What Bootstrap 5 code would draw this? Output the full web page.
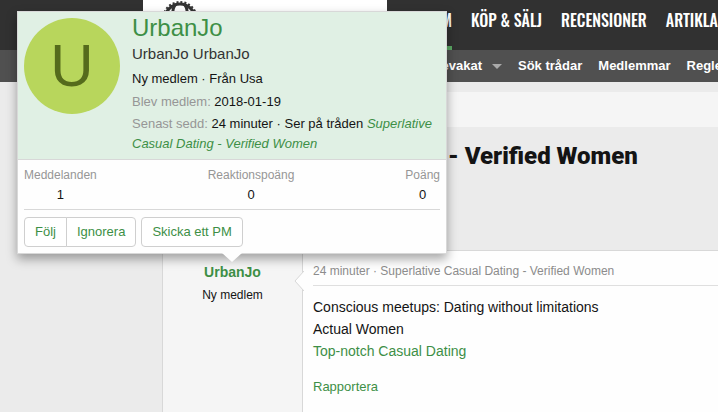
<!DOCTYPE html>
<html lang="sv">
<head>
<meta charset="utf-8">
<meta name="viewport" content="width=device-width, initial-scale=1">
<title>Superlative Casual Dating - Verified Women</title>
<link href="https://cdn.jsdelivr.net/npm/bootstrap@5.3.0/dist/css/bootstrap.min.css" rel="stylesheet">
<style>
body{background:#ebebeb;color:#141414;font:13px/20px "Liberation Sans",Arial,sans-serif}
a{color:#3d8f46;text-decoration:none}
.site-head{background:#313131;height:50px;padding-left:143px}
.site-logo{background:#fff;width:244px;height:50px;padding-left:19px}
.main-nav{gap:19px;min-width:0}
.main-nav a{color:#fff;font:500 16px/40px Oswald,"Roboto Condensed","Open Sans Condensed",Roboto,sans-serif;white-space:nowrap}
.main-nav .first-item{width:65px}
.main-nav .current{border-bottom:4px solid #5ba864;height:50px}
.sub-nav{background:#505050;height:32px;padding-left:360px;gap:16px}
.sub-nav a{color:#fff;font-weight:bold;white-space:nowrap}
.sub-nav .first-item{width:142px;gap:10px}
.caret{border:5px solid transparent;border-top-color:#aaa;border-bottom:0}
.page-body{padding-left:162px}
.crumbs{background:#f5f5f5;height:35px;margin-top:10px}
.thread-title{font:900 24px/30px Roboto,sans-serif;margin:14px 0 79px;white-space:nowrap}
.post{background:#fefefe;border:1px solid #d8d8d8;border-width:1px 0 0 1px;min-height:162px}
.post-user{width:140px;background:#f5f5f5;border-right:1px solid #d8d8d8;padding-top:11px;font-size:12px}
.post-user a{font-size:14px;font-weight:bold}
.post-user .role{margin-top:3px}
.post-arrow{left:131px;top:20px}
.post-main{padding:10px 0 0 10px}
.post-meta{border-bottom:1px solid #dfdfdf;color:#8c8c8c;font-size:12px;padding-bottom:4px;margin-bottom:10px}
.post-text{font-size:14px;line-height:22px;margin-bottom:15px}
.member-tip{left:17px;top:11px;width:430px;background:#fefefe;border:1px solid #d8d8d8;box-shadow:0 5px 10px rgba(0,0,0,.35)}
.tip-head{background:#e0f0e4;border-bottom:1px solid #d8d8d8;padding:6px 6px 5px;gap:12px}
.avatar-u{width:96px;height:96px;border-radius:50%;background:#b8d65c;color:#556b1c;font-size:60px}
.tip-name{font-size:24px;line-height:28px;margin:-4px 0 0}
.tip-head .sub{font-size:15px;line-height:24px;color:#333}
.tip-head .row-a{margin:3px 0}
.tip-head .row-b{margin-bottom:2px}
.soft{color:#969696}
.tip-stats{margin:0 6px;padding:6px 0 5px;border-bottom:1px solid #d8d8d8;line-height:19px}
.tip-stats .soft{font-size:12px}
.tip-actions{padding:7px 6px 6px;gap:5px}
.tip-actions .btn{--bs-btn-color:#3d8f46;--bs-btn-border-color:#cfcfcf;--bs-btn-padding-x:10px;--bs-btn-padding-y:4px;--bs-btn-font-size:13px;--bs-btn-line-height:20px;--bs-btn-border-radius:4px;--bs-btn-bg:#fff}
.tip-arrow{left:204px;top:100%}
</style>
</head>
<body>
<header>
<div class="site-head d-flex">
<a class="site-logo flex-shrink-0" href="#" aria-label="Start"><svg class="d-block" width="36" height="38" viewBox="0 0 36 38" fill="none" stroke="#333"><circle cx="18" cy="19" r="15" stroke-width="3"/><circle cx="18" cy="19" r="17" stroke-width="2" stroke-dasharray="2 2"/><path d="M14 4Q10 8 11 15M22 4Q26 8 25 15" stroke-width="3"/></svg></a>
<nav class="main-nav d-flex flex-grow-1 overflow-hidden">
<div class="first-item d-flex justify-content-end flex-shrink-0"><a class="current" href="#">FORUM</a></div>
<a href="#">KÖP &amp; SÄLJ</a><a href="#">RECENSIONER</a><a href="#">ARTIKLAR</a>
</nav>
</div>
<nav class="sub-nav d-flex align-items-center overflow-hidden">
<div class="first-item d-flex align-items-center justify-content-end flex-shrink-0"><a href="#">Bevakat</a><span class="caret"></span></div>
<a href="#">Sök trådar</a><a href="#">Medlemmar</a><a href="#">Regler</a>
</nav>
</header>
<main class="page-body">
<div class="crumbs"></div>
<h1 class="thread-title">Superlative Casual Dating - Verified Women</h1>
<article class="post d-flex position-relative">
<div class="post-user text-center flex-shrink-0"><a class="d-block" href="#">UrbanJo</a><div class="role">Ny medlem</div></div>
<svg class="post-arrow position-absolute" width="10" height="20" viewBox="0 0 10 20"><path d="M10 0L1 10L10 20" fill="#fefefe" stroke="#d8d8d8"/></svg>
<div class="post-main flex-grow-1">
<div class="post-meta">24 minuter · Superlative Casual Dating - Verified Women</div>
<div class="post-text">Conscious meetups: Dating without limitations<br>Actual Women<br><a href="#">Top-notch Casual Dating</a></div>
<a href="#">Rapportera</a>
</div>
</article>
</main>
<section class="member-tip position-absolute">
<div class="tip-head d-flex">
<div class="avatar-u d-flex align-items-center justify-content-center flex-shrink-0">U</div>
<div><h2 class="tip-name"><a href="#">UrbanJo</a></h2>
<div class="sub">UrbanJo UrbanJo</div><div class="row-a">Ny medlem · Från Usa</div>
<div class="row-b"><span class="soft">Blev medlem:</span> 2018-01-19</div>
<div><span class="soft">Senast sedd:</span> 24 minuter · Ser på tråden <a href="#"><em>Superlative Casual Dating - Verified Women</em></a></div></div>
</div>
<div class="tip-stats d-flex justify-content-between text-center">
<div><div class="soft">Meddelanden</div>1</div><div><div class="soft">Reaktionspoäng</div>0</div><div><div class="soft">Poäng</div>0</div>
</div>
<div class="tip-actions d-flex">
<div class="btn-group"><button type="button" class="btn">Följ</button><button type="button" class="btn">Ignorera</button></div>
<button type="button" class="btn">Skicka ett PM</button>
</div>
<svg class="tip-arrow position-absolute" width="20" height="10" viewBox="0 0 20 10"><path d="M0 0H20L10 9Z" fill="#fefefe"/></svg>
</section>
<script src="https://cdn.jsdelivr.net/npm/bootstrap@5.3.0/dist/js/bootstrap.bundle.min.js"></script>
</body>
</html>
